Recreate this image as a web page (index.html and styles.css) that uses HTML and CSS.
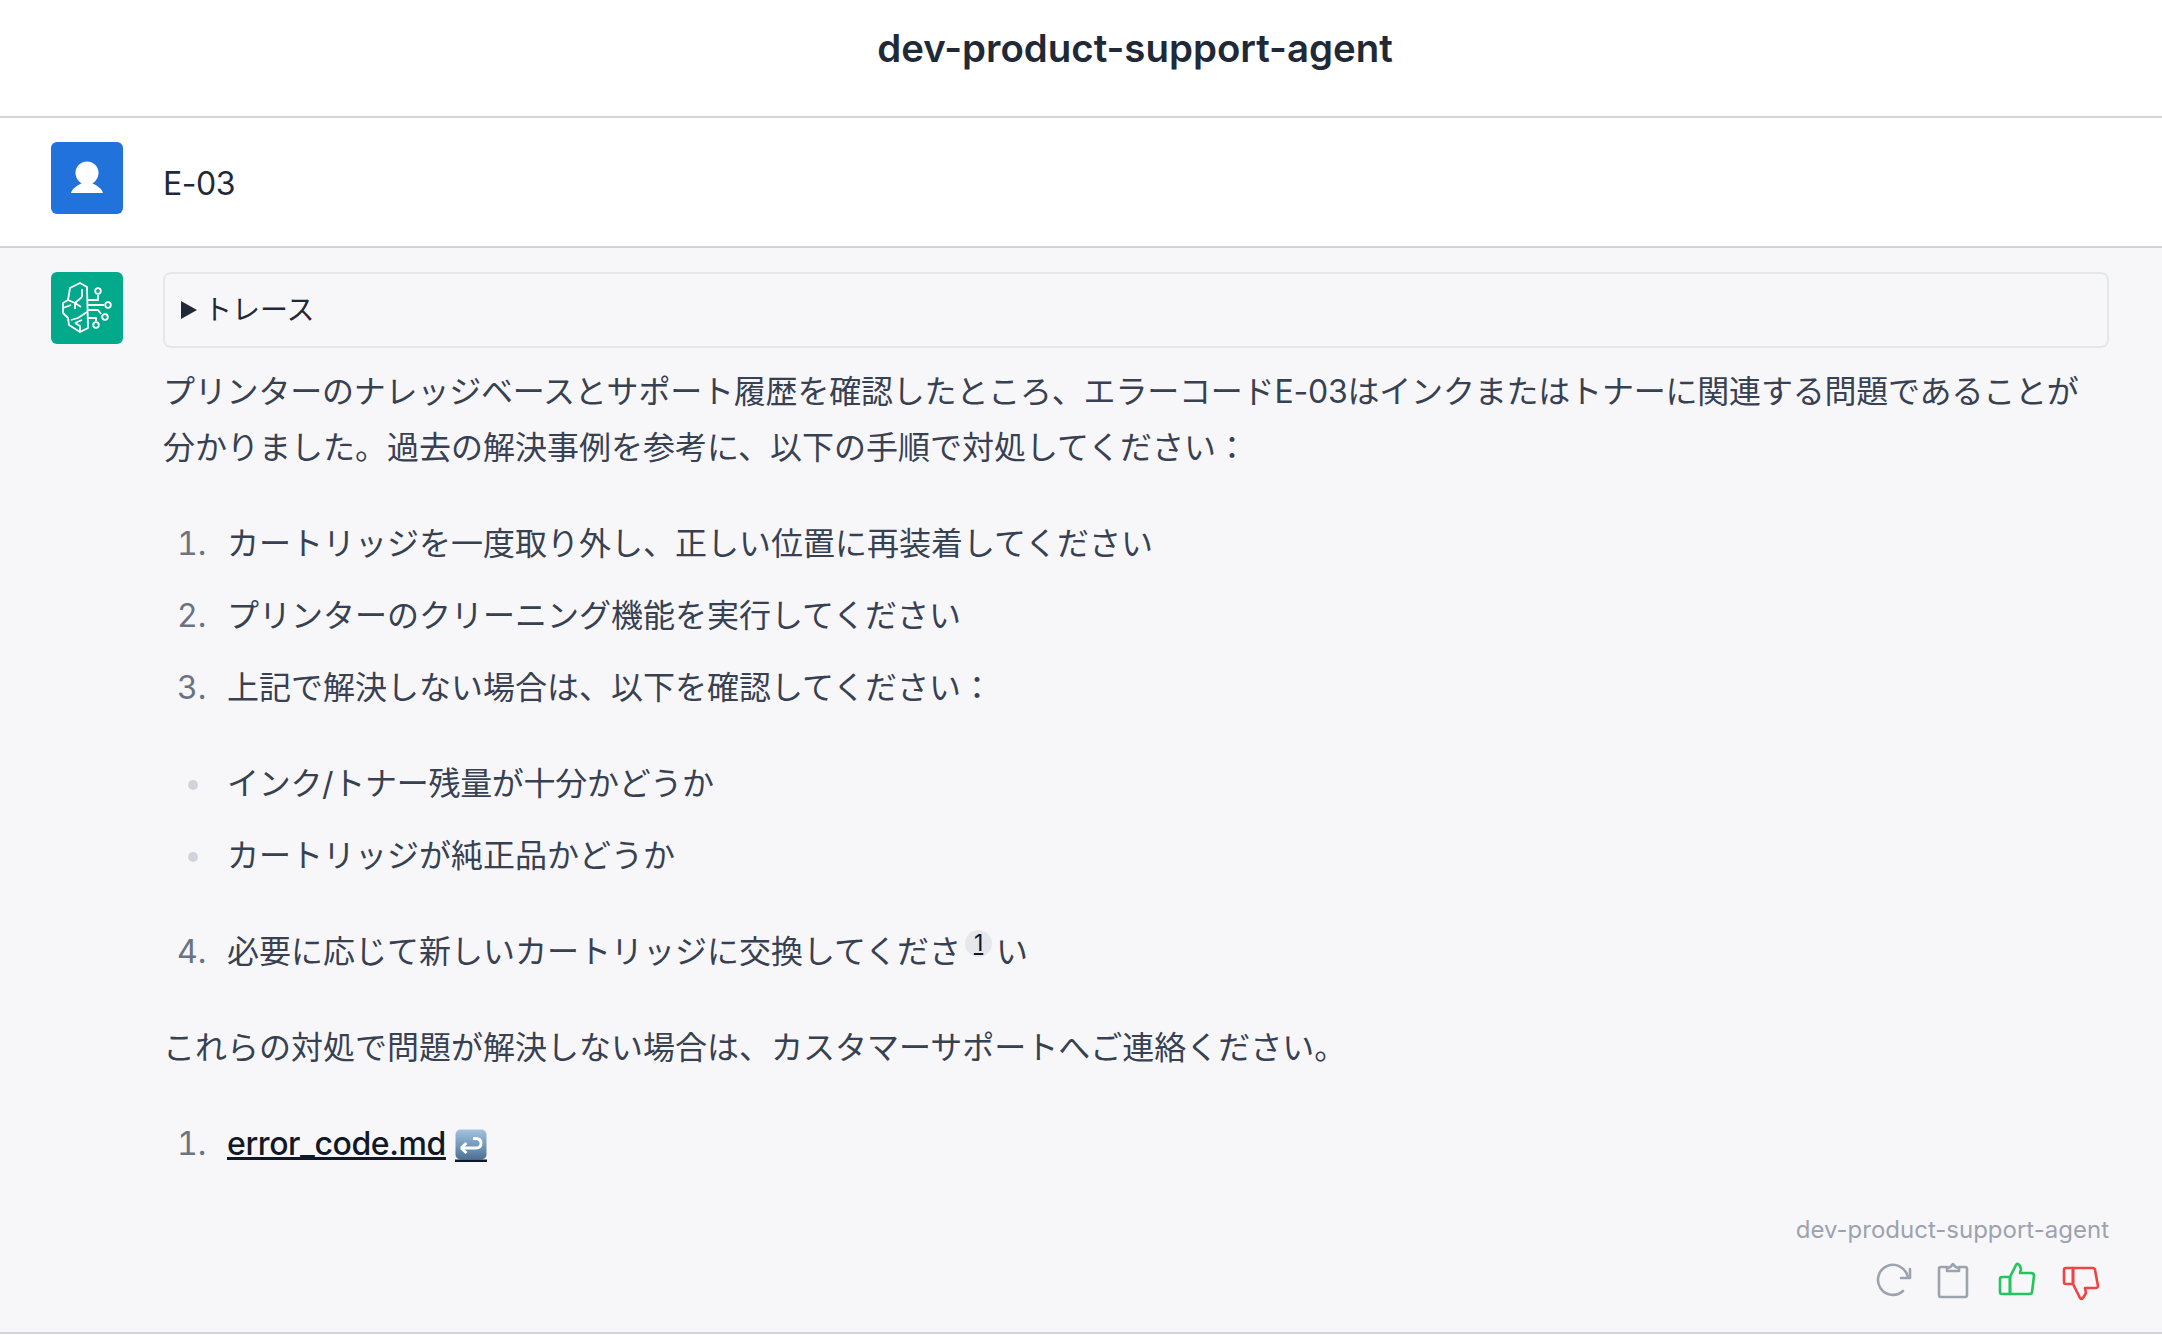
FILE: index.html
```html
<!DOCTYPE html>
<html lang="ja">
<head>
  <meta charset="UTF-8">
  <title>dev-product-support-agent</title>
  <link rel="stylesheet" href="styles.css">
</head>
<body>
  <header class="top-bar"><h1>dev-product-support-agent</h1></header>

  <section class="message message-user">
    <div class="avatar avatar-user">
      <svg viewBox="0 0 72 72" width="72" height="72"><circle cx="36" cy="31" r="11.5" fill="#fff"/><path d="M20 51c1-4 5-7 11-10h10c6 3 10 6 11 10z" fill="#fff"/></svg>
    </div>
    <div class="user-text">E-03</div>
  </section>

  <section class="message message-bot">
    <div class="avatar avatar-bot">
      <svg viewBox="0 0 72 72" width="72" height="72" fill="none" stroke="#fff" stroke-width="1.800" stroke-linejoin="round">
        <path d="M36 15l-7-4-10 5-2 12-5 3v10l5 5 1 7 11 7 8-4z"/>
        <path d="M17 28l7 3v6M12 36l8-3M24 31l7-6M31 25v-8M24 31l6 4M36 40l-9 6-7 2M29 60v-6l-5-3M24 51l7-3"/>
        <path d="M36 28h11v-5M36 33h17M36 38h11l3 4M36 46h9v3"/>
        <circle cx="47" cy="19" r="2.800"/><circle cx="57" cy="33" r="2.800"/><circle cx="54" cy="45" r="2.800"/><circle cx="45" cy="53" r="2.800"/>
      </svg>
    </div>
    <div class="bot-body">
      <div class="trace"><span class="trace-arrow"></span><span class="trace-label">トレース</span></div>
      <div class="prose">
        <p class="intro">プリンターのナレッジベースとサポート履歴を確認したところ、エラーコードE-03はインクまたはトナーに関連する問題であることが分かりました。過去の解決事例を参考に、以下の手順で対処してください：</p>
        <ol>
          <li>カートリッジを一度取り外し、正しい位置に再装着してください</li>
          <li>プリンターのクリーニング機能を実行してください</li>
          <li>上記で解決しない場合は、以下を確認してください：</li>
        </ol>
        <ul>
          <li class="tight">インク/トナー残量が十分かどうか</li>
          <li>カートリッジが純正品かどうか</li>
        </ul>
        <ol start="4">
          <li>必要に応じて新しいカートリッジに交換してくださ<sup class="cite"><a href="#ref1">1</a></sup>い</li>
        </ol>
        <p>これらの対処で問題が解決しない場合は、カスタマーサポートへご連絡ください。</p>
        <ol>
          <li id="ref1"><a href="#" class="file-link">error_code.md</a> <a href="#" class="back-link"><svg viewBox="0 0 32 34" width="32" height="34"><defs><linearGradient id="keycap" x1="0" y1="0" x2="0" y2="1"><stop offset="0" stop-color="#a3c3df"/><stop offset="1" stop-color="#4a7296"/></linearGradient></defs><rect x="0.5" y="0.5" width="31" height="30" rx="5" fill="url(#keycap)"/><path d="M6 19h15c4 0 5-2 5-4.500s-1-5-5-5h-3M6 19l5.500-5M6 19l5.500 5" fill="none" stroke="#fff" stroke-width="2.800"/><rect y="30.500" width="32" height="2.500" fill="#111827"/></svg></a></li>
        </ol>
      </div>
      <div class="agent-name">dev-product-support-agent</div>
      <div class="actions">
        <svg class="icon-grey" viewBox="0 0 40 40" width="40" height="40"><path d="M38.500 15A15 15 0 1 0 34 30"/><path d="M41 8v9h-9"/></svg>
        <svg class="icon-grey" viewBox="0 0 40 40" width="40" height="40"><path d="M14 6H8a2 2 0 0 0-2 2v26a2 2 0 0 0 2 2h24a2 2 0 0 0 2-2V8a2 2 0 0 0-2-2h-6"/><path d="M14 10V7c3 0 4-1 6-4 2 3 3 4 6 4v3z"/></svg>
        <svg class="icon-green" viewBox="0 0 40 40" width="40" height="40"><path d="M13 16H5a2 2 0 0 0-2 2v13a2 2 0 0 0 2 2h8z"/><path d="M13 16l6-12c1-2 3-1 4 1l1 3-1 4h11c2 0 3 1 3 3l-2 16c0 1-1 2-3 2H13z"/></svg>
        <svg class="icon-red" viewBox="0 0 40 40" width="40" height="40"><path d="M12 7H5a2 2 0 0 0-2 2v12a2 2 0 0 0 2 2h7z"/><path d="M12 7h20c1 0 2 1 2 2l3 16c0 1-1 2-2 2H24l1 5-3 5c-1 1-2 1-3 0l-7-14z"/></svg>
      </div>
    </div>
  </section>
</body>
</html>
```

FILE: styles.css
```css
* { box-sizing: border-box; }
html, body { margin: 0; padding: 0; }

body {
  background: #fff;
  color: #1f2937;
  font-family: Inter, 'Noto Sans CJK JP', sans-serif;
  font-size: 32px;
}

.top-bar {
  height: 118px;
  border-bottom: 2px solid #d1d5db;
  display: flex;
  justify-content: center;
  padding: 22px 0 0 108px;
}

.top-bar h1 {
  margin: 0;
  font-size: 38.400px;
  line-height: 52px;
  font-weight: 600;
  color: #1f2937;
}

/* Message rows */
.message {
  display: flex;
  gap: 40px;
  padding: 24px 53px 0 51px;
  border-bottom: 2px solid #d1d5db;
}

.message-user { height: 130px; }
.message-bot { background: #f7f7f9; height: 1086px; }

.avatar {
  flex: 0 0 72px;
  width: 72px;
  height: 72px;
  border-radius: 6px;
}
.avatar svg { display: block; }
.avatar-user { background: #2172db; }
.avatar-bot { background: #03a98b; }

.user-text {
  padding-top: 14px;
  line-height: 56px;
  letter-spacing: -0.500px;
  color: #1f2937;
}

.bot-body { flex: 1; min-width: 0; }

/* Trace box */
.trace {
  height: 76px;
  border: 2px solid #e5e7eb;
  border-radius: 8px;
  padding: 0 16px;
  font-size: 28px;
  display: flex;
  align-items: center;
  color: #1f2937;
}

.trace-label { position: relative; top: -2px; }

.trace-arrow {
  width: 0;
  height: 0;
  border-left: 16px solid #1f2937;
  border-top: 9px solid transparent;
  border-bottom: 9px solid transparent;
  margin-right: 7px;
}

/* Answer text */
.prose {
  margin-top: 16px;
  color: #374151;
  line-height: 56px;
}

.prose p { margin: 0 0 40px; }
.prose ol, .prose ul { margin: 0 0 40px; padding-left: 52px; }
.prose li { margin: 16px 0; padding-left: 12px; }
.prose ol li::marker { color: #6b7280; }
.prose ul li::marker { color: #d1d5db; }
.prose a { color: #111827; font-weight: 500; }
.prose li:first-child { margin-top: 0; }
.prose li:last-child { margin-bottom: 0; }

.prose .intro::first-line { letter-spacing: -0.200px; }
.prose .tight { letter-spacing: -0.300px; }
.prose .file-link { letter-spacing: -0.400px; }

.cite {
  display: inline-block;
  width: 27px;
  height: 27px;
  border-radius: 50%;
  background: #e5e7eb;
  margin: 0 4px 0 4px;
  font-size: 23px;
  line-height: 26px;
  text-align: center;
  vertical-align: 12px;
}
.cite a { font-weight: 400; }

.back-link svg { vertical-align: -8px; }

/* Footer of the answer */
.agent-name {
  margin-top: 36px;
  text-align: right;
  font-size: 24px;
  line-height: 36px;
  color: #9ca3af;
}

.actions {
  margin-top: 13px;
  display: flex;
  justify-content: flex-end;
  gap: 24px;
  padding-right: 8px;
}

.actions svg { fill: none; stroke-width: 2.600; stroke-linejoin: round; stroke-linecap: round; overflow: visible; }
.icon-grey { stroke: #9ca3af; }
.icon-green { stroke: #22c55e; }
.icon-red { stroke: #ef4444; }
```
